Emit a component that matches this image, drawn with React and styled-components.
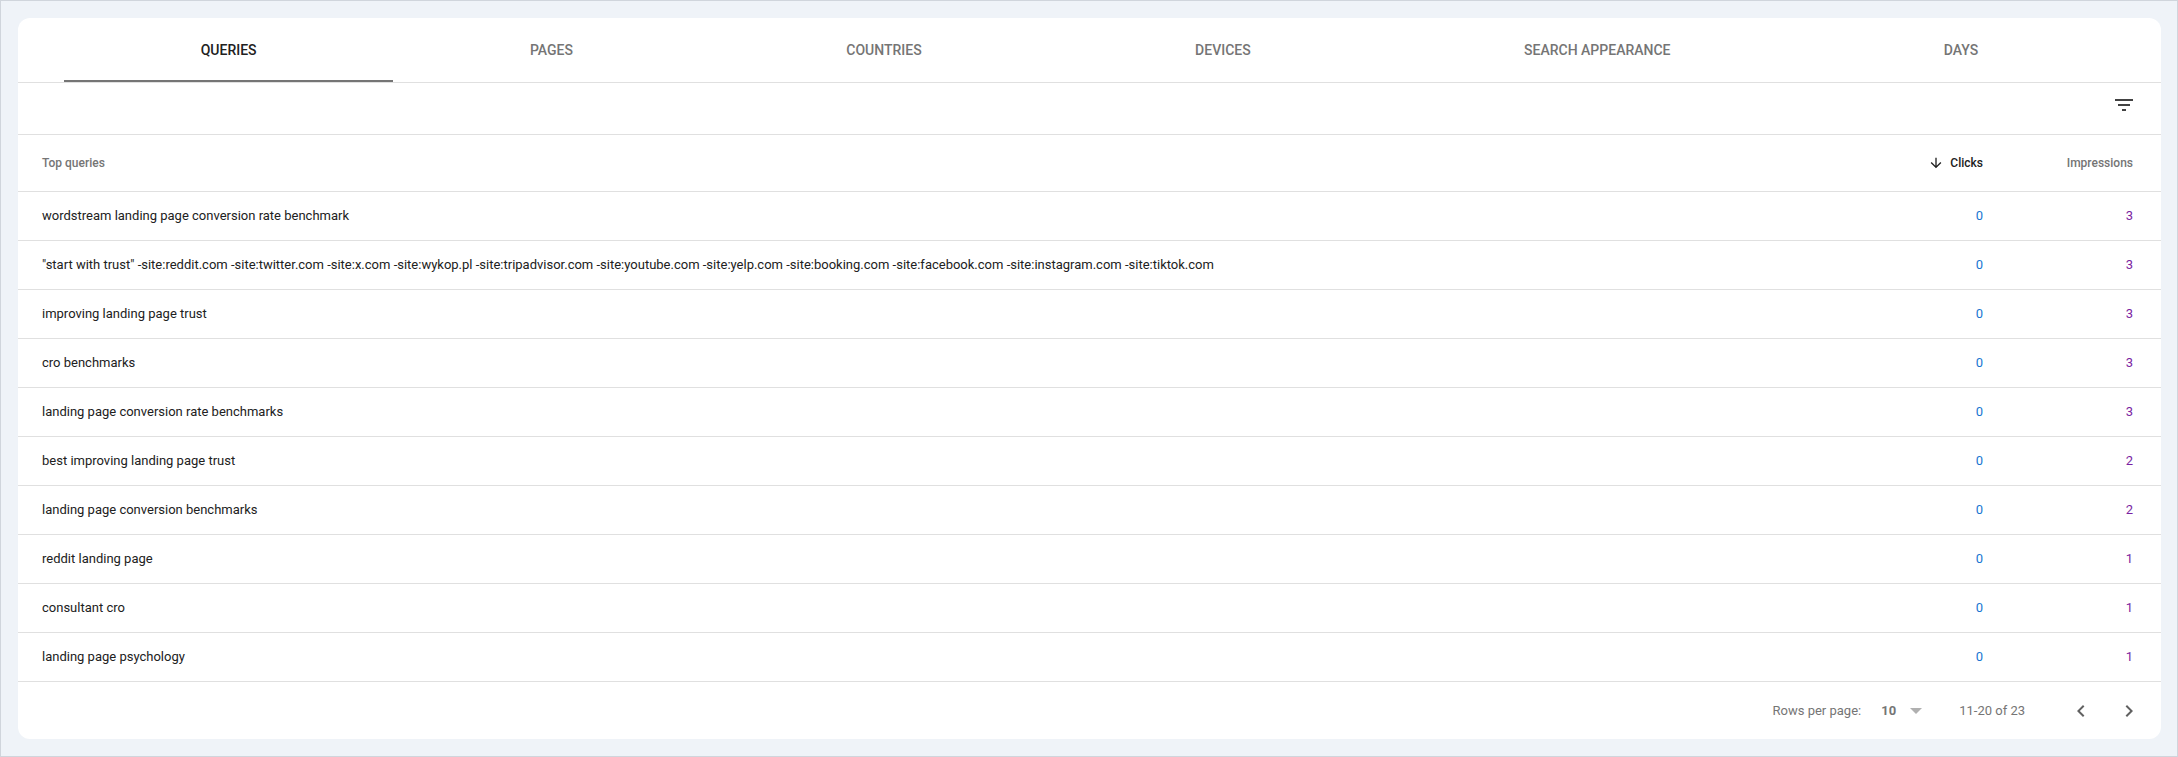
import React, { useState } from "react";
import styled, { createGlobalStyle } from "styled-components";

const GlobalStyle = createGlobalStyle`
  * { box-sizing: border-box; }
  body {
    margin: 0;
    background: #eff3f8;
    font-family: Roboto, "Liberation Sans", sans-serif;
    color: #202124;
  }
  button, select { font-family: inherit; }
`;

const Page = styled.main`
  min-height: 100vh;
  border: 1px solid #d0d5dc;
  padding: 17px 16px 17px 17px;
`;

const Card = styled.section`
  background: #fff;
  border-radius: 12px;
  overflow: hidden;
`;

const TabList = styled.div`
  display: flex;
  padding: 0 46px;
  border-bottom: 1px solid #e0e0e0;
`;

const Tab = styled.button`
  flex: 1 1 auto;
  height: 64px;
  padding: 2px 24px 0;
  border: 0;
  border-bottom: 2px solid ${(p) => (p.$active ? "#757575" : "transparent")};
  background: none;
  color: ${(p) => (p.$active ? "#212121" : "#757575")};
  font-size: 14px;
  line-height: 20px;
  font-weight: 500;
  text-transform: uppercase;
  white-space: nowrap;
  cursor: pointer;
`;

const Toolbar = styled.div`
  display: flex;
  justify-content: flex-end;
  height: 52px;
  padding: 10px 25px 0;
  border-bottom: 1px solid #e0e0e0;
`;

const IconButton = styled.button`
  display: flex;
  padding: 0;
  border: 0;
  background: none;
  color: ${(p) => (p.$dark ? "#424242" : "#616161")};
  cursor: pointer;
`;

const Icon = styled.svg`
  display: block;
  width: ${(p) => p.$size || 24}px;
  height: ${(p) => p.$size || 24}px;
  fill: currentColor;
`;

const Table = styled.table`
  width: 100%;
  table-layout: fixed;
  border-collapse: separate;
  border-spacing: 0;
`;

const HeadCell = styled.th`
  width: ${(p) => p.$width || "auto"};
  height: 57px;
  padding: 0 ${(p) => (p.$last ? 28 : 0)}px 0 ${(p) => (p.$numeric ? 0 : 24)}px;
  border-bottom: 1px solid #e0e0e0;
  text-align: ${(p) => (p.$numeric ? "right" : "left")};
  font-size: 12px;
  line-height: 16px;
  font-weight: 500;
  color: #757575;
`;

const SortButton = styled.button`
  display: flex;
  align-items: center;
  gap: 6px;
  margin-left: auto;
  padding: 0;
  border: 0;
  background: none;
  color: ${(p) => (p.$active ? "#212121" : "#757575")};
  font-size: 12px;
  line-height: 16px;
  font-weight: 500;
  cursor: pointer;
`;

const Cell = styled.td`
  height: 49px;
  padding: 0 ${(p) => (p.$last ? 28 : 0)}px 0 ${(p) => (p.$numeric ? 0 : 24)}px;
  border-bottom: 1px solid #e0e0e0;
  text-align: ${(p) => (p.$numeric ? "right" : "left")};
  font-size: 13px;
  line-height: 16px;
  color: ${(p) => p.$color || "#212121"};
  white-space: nowrap;
`;

const Footer = styled.footer`
  display: flex;
  align-items: center;
  justify-content: flex-end;
  height: 57px;
  padding: 0 20px;
  font-size: 13px;
  line-height: 20px;
  color: #757575;
`;

const PageSize = styled.label`
  display: flex;
  align-items: center;
  gap: 20px;
`;

const SelectBox = styled.span`
  display: grid;
  align-items: center;
  width: 41px;
  margin-right: 37px;

  & > * { grid-area: 1 / 1; }
`;

const Select = styled.select`
  appearance: none;
  width: 100%;
  padding: 0;
  border: 0;
  background: none;
  color: #757575;
  font-size: 13px;
  line-height: 20px;
  font-weight: 700;
  cursor: pointer;
`;

const Caret = styled.span`
  justify-self: end;
  border: 6px solid transparent;
  border-top-color: #b0b0b0;
  border-bottom: 0;
  pointer-events: none;
`;

const Pager = styled.nav`
  display: flex;
  gap: 24px;
  margin-left: 44px;
`;

const tabs = ["Queries", "Pages", "Countries", "Devices", "Search appearance", "Days"];

const rows = [
  ["wordstream landing page conversion rate benchmark", 0, 3],
  ['"start with trust" -site:reddit.com -site:twitter.com -site:x.com -site:wykop.pl -site:tripadvisor.com -site:youtube.com -site:yelp.com -site:booking.com -site:facebook.com -site:instagram.com -site:tiktok.com', 0, 3],
  ["improving landing page trust", 0, 3],
  ["cro benchmarks", 0, 3],
  ["landing page conversion rate benchmarks", 0, 3],
  ["best improving landing page trust", 0, 2],
  ["landing page conversion benchmarks", 0, 2],
  ["reddit landing page", 0, 1],
  ["consultant cro", 0, 1],
  ["landing page psychology", 0, 1],
];

export default function App() {
  const [active, setActive] = useState("Queries");
  return (
    <>
      <GlobalStyle />
      <Page>
        <Card>
          <TabList role="tablist">
            {tabs.map((name) => (
              <Tab
                key={name}
                role="tab"
                aria-selected={name === active}
                $active={name === active}
                onClick={() => setActive(name)}
              >
                {name}
              </Tab>
            ))}
          </TabList>
          <Toolbar>
            <IconButton $dark aria-label="Filter rows">
              <Icon viewBox="0 0 24 24" aria-hidden="true">
                <path d="M10 18h4v-2h-4v2zM3 6v2h18V6H3zm3 7h12v-2H6v2z" />
              </Icon>
            </IconButton>
          </Toolbar>
          <Table>
            <thead>
              <tr>
                <HeadCell scope="col">Top queries</HeadCell>
                <HeadCell scope="col" $numeric $width="160px" aria-sort="descending">
                  <SortButton $active>
                    <Icon $size={16} viewBox="0 0 24 24" aria-hidden="true">
                      <path d="M20 12l-1.41-1.41L13 16.17V4h-2v12.17l-5.58-5.59L4 12l8 8 8-8z" />
                    </Icon>
                    Clicks
                  </SortButton>
                </HeadCell>
                <HeadCell scope="col" $numeric $last $width="178px">
                  <SortButton>Impressions</SortButton>
                </HeadCell>
              </tr>
            </thead>
            <tbody>
              {rows.map(([query, clicks, impressions]) => (
                <tr key={query}>
                  <Cell>{query}</Cell>
                  <Cell $numeric $color="#1976d2">{clicks}</Cell>
                  <Cell $numeric $last $color="#7b1fa2">{impressions}</Cell>
                </tr>
              ))}
            </tbody>
          </Table>
          <Footer>
            <PageSize>
              Rows per page:
              <SelectBox>
                <Select defaultValue="10">
                  <option>5</option>
                  <option>10</option>
                  <option>25</option>
                </Select>
                <Caret />
              </SelectBox>
            </PageSize>
            <span>11-20 of 23</span>
            <Pager aria-label="Pagination">
              <IconButton aria-label="Previous page">
                <Icon viewBox="0 0 24 24" aria-hidden="true">
                  <path d="M15.41 7.41L14 6l-6 6 6 6 1.41-1.41L10.83 12z" />
                </Icon>
              </IconButton>
              <IconButton aria-label="Next page">
                <Icon viewBox="0 0 24 24" aria-hidden="true">
                  <path d="M10 6L8.59 7.41 13.17 12l-4.58 4.59L10 18l6-6z" />
                </Icon>
              </IconButton>
            </Pager>
          </Footer>
        </Card>
      </Page>
    </>
  );
}
